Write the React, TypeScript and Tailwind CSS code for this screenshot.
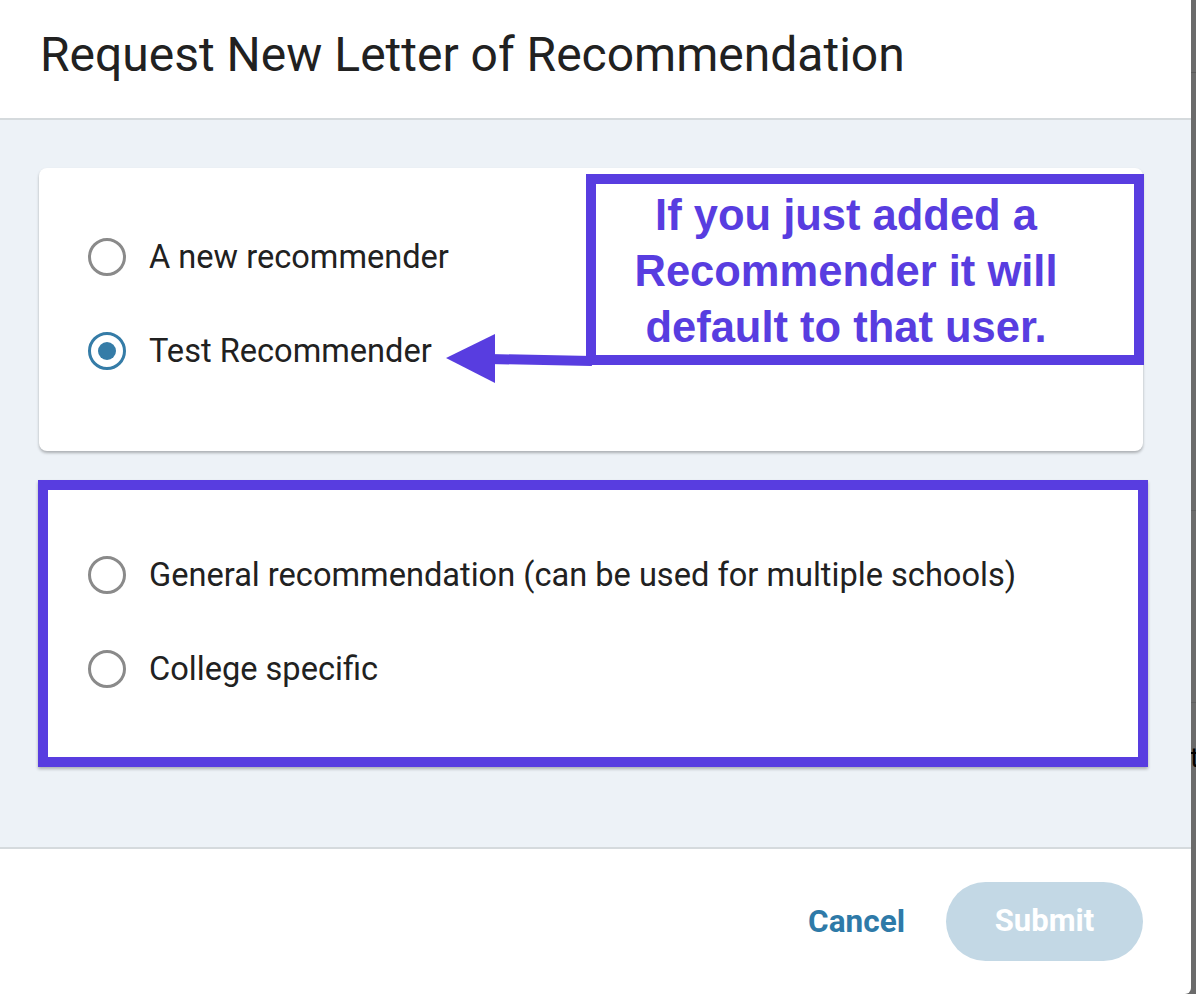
import React from "react";

function Radio({ checked }: { checked?: boolean }) {
  return (
    <div
      className={
        "w-[38px] h-[38px] shrink-0 rounded-full border-[3.5px] flex items-center justify-center " +
        (checked ? "border-[#357ca7]" : "border-[#8a8a8a]")
      }
    >
      {checked && <div className="w-[18px] h-[18px] rounded-full bg-[#357ca7]" />}
    </div>
  );
}

function Row({ label, checked }: { label: string; checked?: boolean }) {
  return (
    <div className="h-[94px] flex items-center">
      <Radio checked={checked} />
      <span className="ml-[23px] text-[32.6px] text-[#212121]">{label}</span>
    </div>
  );
}

export default function App() {
  return (
    <div
      className="w-[1196px] h-[994px] flex bg-[#6b6b6b] overflow-hidden"
      style={{ fontFamily: "Roboto, 'Noto Sans', sans-serif" }}
    >
      <div className="w-[1191px] h-[994px] flex flex-col bg-white rounded-br-[6px] overflow-hidden">
        {/* Header */}
        <div className="h-[120px] shrink-0 px-[40px] pt-[27px] border-b-2 border-[#d5dadd]">
          <h1 className="text-[48px] leading-[56px] text-[#212121]">
            Request New Letter of Recommendation
          </h1>
        </div>

        {/* Body */}
        <div className="h-[727px] shrink-0 bg-[#edf2f7] pl-[39px] pt-[48px] flex flex-col">
          <div className="relative w-[1104px] h-[283px] bg-white rounded-[8px] shadow-[0_2px_3px_rgba(0,0,0,0.28)] pl-[49px] pt-[42px]">
            <Row label="A new recommender" />
            <Row label="Test Recommender" checked />

            {/* arrow */}
            <svg
              className="absolute left-0 top-0 overflow-visible"
              width="1104"
              height="283"
              viewBox="0 0 1104 283"
            >
              <line x1="450" y1="191" x2="553" y2="193" stroke="#583de0" strokeWidth="10" />
              <polygon points="407,190 456,166 456,215" fill="#583de0" />
            </svg>

            {/* annotation */}
            <div
              className="absolute left-[547px] top-[6px] w-[558px] h-[191px] border-[10px] border-[#583de0] bg-white pt-[3px] pr-[38px] text-center text-[#583de0] font-bold text-[43.5px] leading-[56px]"
              style={{ fontFamily: "'Liberation Sans', Arial, sans-serif" }}
            >
              <div>If you just added a</div>
              <div>Recommender it will</div>
              <div>default to that user.</div>
            </div>
          </div>

          <div className="mt-[29px] ml-[-1px] w-[1110px] h-[287px] bg-white border-[10px] border-[#583de0] shadow-[0_2px_3px_rgba(0,0,0,0.28)] pl-[40px] pt-[38px]">
            <Row label="General recommendation (can be used for multiple schools)" />
            <Row label="College specific" />
          </div>
        </div>

        {/* Footer */}
        <div className="flex-1 border-t-2 border-[#d5dadd] flex items-center justify-end pr-[48px]">
          <span className="text-[31.5px] font-bold text-[#2e7aa8] mr-[41px]">Cancel</span>
          <div className="w-[197px] h-[79px] rounded-full bg-[#c3d8e5] flex items-center justify-center">
            <span className="text-[31px] font-bold text-white">Submit</span>
          </div>
        </div>
      </div>

      {/* right strip (background page) */}
      <div className="relative flex-1 h-full overflow-hidden">
        <div className="absolute left-0 right-0 top-[72px] h-[1px] bg-[#5a5a5a]" />
        <div className="absolute left-0 right-0 top-[510px] h-[1px] bg-[#5f5f5f]" />
        <div className="absolute left-0 right-0 top-[702px] h-[1px] bg-[#5f5f5f]" />
        <span className="absolute left-[-1px] top-[740px] text-[28px] leading-[36px] text-black">t</span>
      </div>
    </div>
  );
}
